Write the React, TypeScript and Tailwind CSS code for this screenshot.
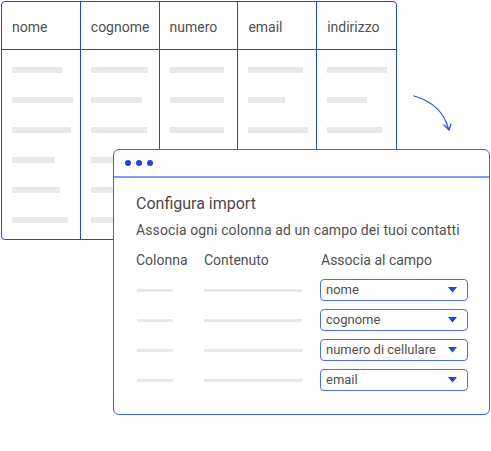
import React from "react"

const columns = ["nome", "cognome", "numero", "email", "indirizzo"]

// bar widths per column, row by row
const barWidths = [
  [50, 61, 59, 42, 48, 56],
  [57, 51, 56, 50, 55, 58],
  [54, 54, 54, 48, 52, 50],
  [55, 37, 60, 50, 44, 52],
  [60, 40, 55, 48, 50, 54],
]

const fields = ["nome", "cognome", "numero di cellulare", "email"]

function Caret() {
  return (
    <svg width="9" height="6" viewBox="0 0 9 6" className="shrink-0">
      <path d="M0 0 H9 L4.5 5.5 Z" fill="#1f45e6" />
    </svg>
  )
}

export default function App() {
  return (
    <div
      className="relative w-[491px] h-[451px] bg-white overflow-hidden"
      style={{ fontFamily: "Roboto, 'Liberation Sans', sans-serif" }}
    >
      {/* Spreadsheet */}
      <div className="ml-[1px] mt-[1px] w-[396px] border border-[#1f45e6] rounded-[4px] flex">
        {columns.map((col, i) => (
          <div
            key={col}
            className={`w-[79px] flex flex-col ${i < columns.length - 1 ? "border-r border-[#1f45e6]" : ""}`}
          >
            <div className="h-[48px] border-b border-[#1f45e6] pl-[10px] pt-[3px] flex items-center text-[14px] text-[#505050]">
              {col}
            </div>
            <div className="h-[189px] pt-[17px] pl-[10px] flex flex-col gap-[24px]">
              {barWidths[i].map((w, r) => (
                <div key={r} className="h-[6px] bg-[#e6e8e9]" style={{ width: w }} />
              ))}
            </div>
          </div>
        ))}
      </div>

      {/* Arrow */}
      <svg
        className="absolute left-[405px] top-[88px]"
        width="55"
        height="50"
        viewBox="0 0 55 50"
        fill="none"
      >
        <path d="M9 8 Q37 16 43.5 41" stroke="#2a4fe8" strokeWidth="1.3" strokeLinecap="round" />
        <path d="M39 37 L44 42 L46 36" stroke="#2a4fe8" strokeWidth="1.3" strokeLinecap="round" strokeLinejoin="round" />
      </svg>

      {/* Import dialog */}
      <div className="absolute left-[113px] top-[149px] w-[377px] h-[266px] bg-white border border-[#3a5ff0] rounded-[6px] flex flex-col">
        <div className="h-[28px] border-b-2 border-[#8099f3] flex items-center pl-[11px] gap-[5px]">
          <span className="w-[6px] h-[6px] rounded-full bg-[#1f45e6]" />
          <span className="w-[6px] h-[6px] rounded-full bg-[#1f45e6]" />
          <span className="w-[6px] h-[6px] rounded-full bg-[#1f45e6]" />
        </div>
        <div className="pl-[22px] pt-[16px] flex flex-col text-[#505050]">
          <div className="text-[16px] leading-[20px] text-[#4a4a4a]">Configura import</div>
          <div className="mt-[6px] text-[14px] leading-[20px] tracking-[0.1px]">
            Associa ogni colonna ad un campo dei tuoi contatti
          </div>
          <div className="mt-[10px] grid grid-cols-[68px_117px_147px] text-[14px] leading-[20px]">
            <div>Colonna</div>
            <div>Contenuto</div>
            <div>Associa al campo</div>
          </div>
          <div className="mt-[9px] flex flex-col gap-[8px]">
            {fields.map((f) => (
              <div key={f} className="grid grid-cols-[68px_117px_147px] items-center">
                <div className="ml-[1px] w-[36px] h-[3px] bg-[#e6e8e9]" />
                <div className="w-[98px] h-[3px] bg-[#e6e8e9]" />
                <div className="-ml-[1px] h-[22px] border border-[#4a6cf0] rounded-[4px] flex items-center justify-between pl-[5px] pr-[10px] text-[13px] text-[#505050]">
                  <span>{f}</span>
                  <Caret />
                </div>
              </div>
            ))}
          </div>
        </div>
      </div>
    </div>
  )
}
